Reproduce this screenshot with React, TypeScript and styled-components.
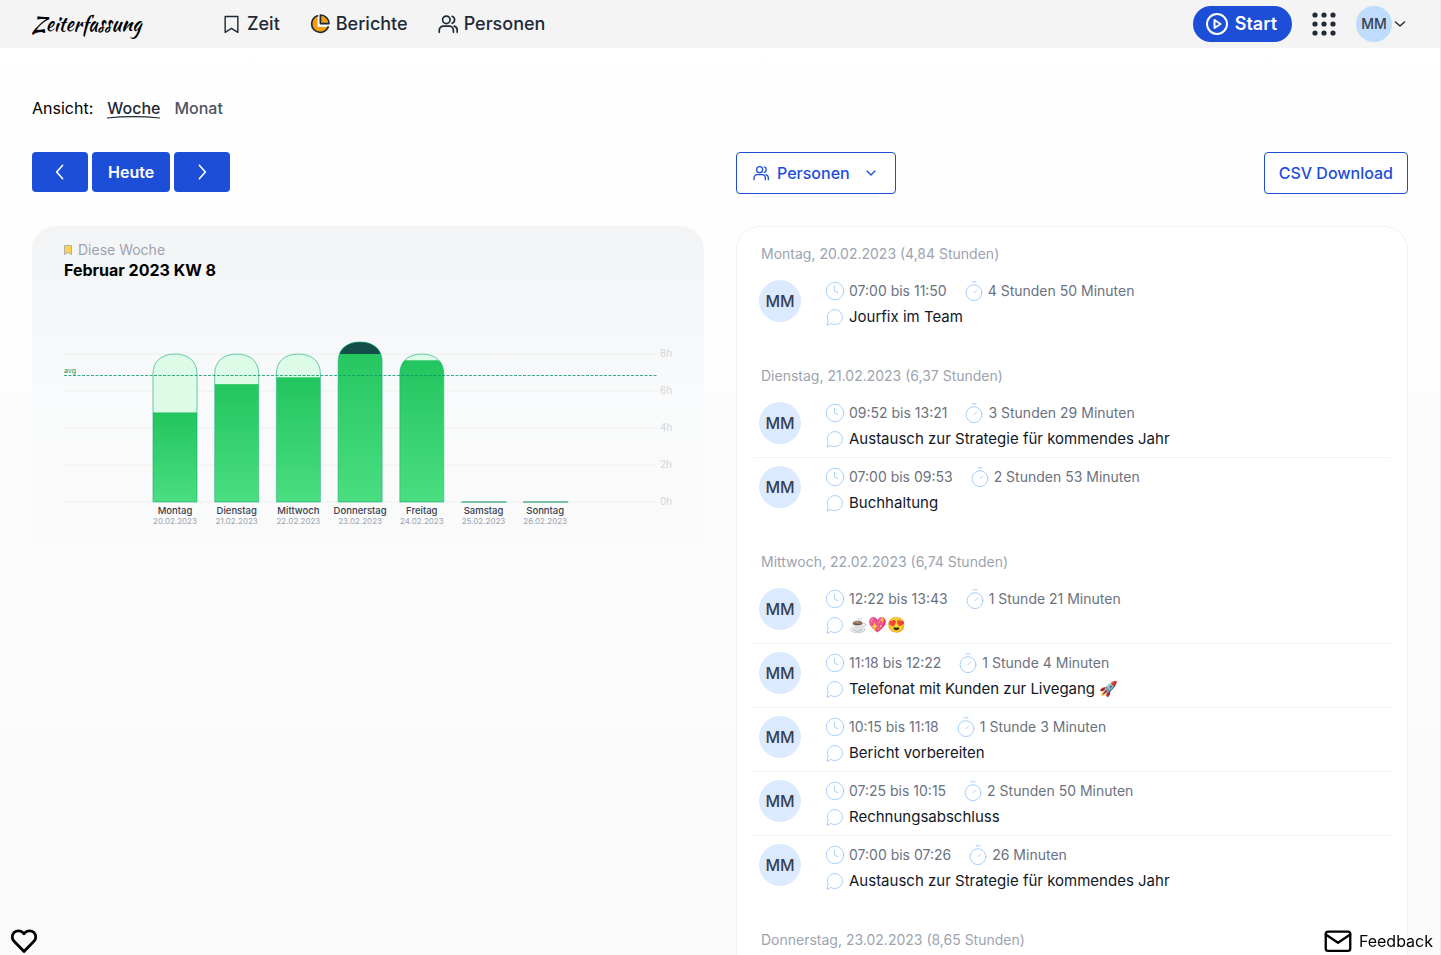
import React from "react";
import styled, { createGlobalStyle } from "styled-components";

const GlobalStyle = createGlobalStyle`
  *, *::before, *::after { box-sizing: border-box; }
  body {
    margin: 0;
    font-family: Inter, "Liberation Sans", sans-serif;
    font-size: 16px;
    line-height: 24px;
    color: #000;
  }
  h1, h2, p, ul { margin: 0; padding: 0; }
  ul { list-style: none; }
  a { color: inherit; text-decoration: none; }
  button { font: inherit; cursor: pointer; }
  svg { display: block; flex-shrink: 0; }
`;

const Page = styled.div`
  height: 100vh;
  overflow: hidden;
  border-right: 1px solid #e8e8ea;
  background: linear-gradient(#ffffff, #fafafa);
`;

const Header = styled.header`
  display: flex;
  align-items: center;
  height: 48px;
  padding: 0 34px 0 32px;
  background: #f4f4f4;
`;

const Logo = styled.a`
  width: 190px;
  font-family: "Kaushan Script", "Caveat Brush", Lato, cursive;
  font-size: 20px;
  font-weight: 400;
`;

const Nav = styled.nav`
  display: flex;
  flex: 1;
  gap: 30px;
`;

const NavLink = styled.a`
  display: flex;
  align-items: center;
  gap: 6px;
  font-size: 18px;
  font-weight: 500;
  color: #1f2937;
`;

const HeaderActions = styled.div`
  display: flex;
  align-items: center;
  gap: 20px;
`;

const StartButton = styled.button`
  display: flex;
  align-items: center;
  gap: 6px;
  height: 36px;
  padding: 0 15px 0 12px;
  border: 0;
  border-radius: 18px;
  background: #1d4ed8;
  color: #fff;
  font-size: 18px;
  font-weight: 600;
`;

const PlainButton = styled.button`
  display: flex;
  align-items: center;
  gap: 2px;
  padding: 0;
  border: 0;
  background: none;
  color: #1f2937;
`;

const Avatar = styled.span<{ $large?: boolean }>`
  display: flex;
  align-items: center;
  justify-content: center;
  flex-shrink: 0;
  width: ${(p) => (p.$large ? 42 : 36)}px;
  height: ${(p) => (p.$large ? 42 : 36)}px;
  border-radius: 50%;
  background: ${(p) => (p.$large ? "#dbeafe" : "#bfdbfe")};
  color: #374151;
  font-size: ${(p) => (p.$large ? 16 : 14)}px;
  font-weight: 500;
`;

const Main = styled.main`
  display: grid;
  grid-template-columns: 1fr 1fr;
  column-gap: 32px;
  padding: 48px 32px 0;
`;

const ViewBar = styled.div`
  display: flex;
  grid-column: 1 / -1;
  gap: 14px;
  margin-bottom: 32px;
`;

const ViewLink = styled.a<{ $active?: boolean }>`
  position: relative;
  font-weight: 500;
  color: ${(p) => (p.$active ? "#1f2937" : "#4b5563")};
`;

const Underline = styled.svg`
  position: absolute;
  left: 0;
  bottom: 1px;
  width: 100%;
  height: 4px;
`;

const Controls = styled.div<{ $spread?: boolean }>`
  display: flex;
  align-items: flex-start;
  justify-content: ${(p) => (p.$spread ? "space-between" : "flex-start")};
  gap: 4px;
  margin-bottom: 32px;
`;

const SolidButton = styled.button<{ $icon?: boolean }>`
  display: flex;
  align-items: center;
  justify-content: center;
  height: 40px;
  padding: 0 ${(p) => (p.$icon ? 20 : 16)}px;
  border: 0;
  border-radius: 4px;
  background: #1d4ed8;
  color: #fff;
  font-weight: 600;
`;

const OutlineButton = styled.button`
  display: flex;
  align-items: center;
  gap: 8px;
  height: 42px;
  padding: 0 14px;
  border: 1px solid #1d4ed8;
  border-radius: 4px;
  background: #fff;
  color: #1d4ed8;
  font-weight: 500;

  svg:first-child { margin-left: 2px; }
  svg:last-child { margin: 0 2px 0 5px; }
`;

const ChartCard = styled.section`
  align-self: start;
  padding: 14px 32px;
  border-radius: 24px 24px 0 0;
  background: linear-gradient(#f3f4f6, #f9fafb 55%, #fafafa);
`;

const ChartKicker = styled.p`
  display: flex;
  align-items: center;
  gap: 6px;
  font-size: 14px;
  line-height: 20px;
  color: #9ca3af;
`;

const ChartTitle = styled.h1`
  font-size: 16px;
  line-height: 20px;
  font-weight: 700;
`;

const ChartSvg = styled.svg`
  width: 100%;
  height: auto;
`;

const ListCard = styled.section`
  padding: 17px 16px 24px;
  border: 1px solid #f1f1f3;
  border-radius: 24px;
  background: #fff;
`;

const Day = styled.section`
  & + & { margin-top: 32px; }
`;

const DayTitle = styled.h2`
  margin-bottom: 8px;
  padding-left: 8px;
  font-size: 14px;
  line-height: 20px;
  font-weight: 400;
  color: #9ca3af;
`;

const Entry = styled.li`
  display: flex;
  gap: 24px;
  height: 64px;
  padding: 8px 6px 0;
  border-bottom: 1px solid #f3f4f6;

  &:last-child {
    height: 62px;
    border-bottom: 0;
  }
`;

const EntryBody = styled.div`
  display: flex;
  flex-direction: column;
  gap: 3px;
`;

const EntryTimes = styled.div`
  display: flex;
  gap: 17px;
  font-size: 14px;
  line-height: 22px;
  color: #6b7280;
`;

const Labelled = styled.span`
  display: flex;
  align-items: center;
  gap: 4px;
`;

const Note = styled(Labelled)`
  font-size: 15px;
  line-height: 24px;
  color: #111827;
`;

const Floating = styled.button<{ $side: "left" | "right" }>`
  position: fixed;
  bottom: 0;
  ${(p) => (p.$side === "left" ? "left: 10px" : "right: 8px")};
  display: flex;
  align-items: center;
  gap: 7px;
  height: 28px;
  padding: 0;
  border: 0;
  background: none;
  color: #000;
`;

type IconProps = { size: number; stroke?: number; color?: string; children: React.ReactNode };

const Icon = ({ size, stroke = 2, color = "currentColor", children }: IconProps) => (
  <svg
    width={size}
    height={size}
    viewBox="0 0 24 24"
    fill="none"
    stroke={color}
    strokeWidth={stroke}
    strokeLinecap="round"
    strokeLinejoin="round"
    aria-hidden="true"
  >
    {children}
  </svg>
);

const People = ({ size }: { size: number }) => (
  <Icon size={size} stroke={2}>
    <circle cx="10" cy="7" r="4.5" />
    <path d="M1.500 22v-2.500a5 5 0 0 1 5-5h7a5 5 0 0 1 5 5V22M17 2.800a4.500 4.500 0 0 1 0 8.400M19.500 14.500a5 5 0 0 1 3.500 5V22" />
  </Icon>
);

const Clock = () => (
  <Icon size={20} stroke={1} color="#93c5fd">
    <circle cx="12" cy="12" r="10.500" />
    <path d="M11.500 6v6l4 2" />
  </Icon>
);

const Stopwatch = () => (
  <Icon size={20} stroke={1} color="#93c5fd">
    <circle cx="12" cy="14" r="9.500" />
    <path d="M12 14l3-3M9.500 1h5" />
  </Icon>
);

const Bubble = () => (
  <Icon size={20} stroke={1} color="#93c5fd">
    <path d="M2.500 21.500l1.300-5.400a9 9 0 1 1 3.700 3.900z" />
  </Icon>
);

const BASE = 222;
const HOUR = 18.5;
const BAR = 44;

const bars = [
  { day: "Montag", date: "20.02.2023", hours: 4.84 },
  { day: "Dienstag", date: "21.02.2023", hours: 6.37 },
  { day: "Mittwoch", date: "22.02.2023", hours: 6.74 },
  { day: "Donnerstag", date: "23.02.2023", hours: 8.65 },
  { day: "Freitag", date: "24.02.2023", hours: 7.66 },
  { day: "Samstag", date: "25.02.2023", hours: 0 },
  { day: "Sonntag", date: "26.02.2023", hours: 0 },
];

const WeekChart = () => (
  <ChartSvg viewBox="0 0 608 250" role="img" aria-label="Stunden pro Tag">
    <defs>
      <linearGradient id="worked" x1="0" y1="0" x2="0" y2="1">
        <stop offset="0" stopColor="#22c55e" />
        <stop offset="1" stopColor="#4ade80" />
      </linearGradient>
    </defs>
    {[0, 2, 4, 6, 8].map((h) => {
      const y = BASE - h * HOUR;
      return (
        <g key={h}>
          <path d={`M0 ${y}H593`} stroke="#eeeff0" />
          <text x="596" y={y + 3} fontSize="10" fill="#d1d5db">{h}h</text>
        </g>
      );
    })}
    {bars.map((b, i) => {
      const x = 89 + i * 61.7;
      const mid = x + BAR / 2;
      const top = BASE - Math.max(8, b.hours) * HOUR;
      const fill = BASE - b.hours * HOUR;
      const shape = `M${x} ${BASE}V${top + 20}C${x} ${top + 7} ${x + 9} ${top} ${mid} ${top}S${x + BAR} ${top + 7} ${x + BAR} ${top + 20}V${BASE}z`;
      return (
        <g key={b.day}>
          {b.hours > 0 ? (
            <>
              <clipPath id={`bar${i}`}><path d={shape} /></clipPath>
              <g clipPath={`url(#bar${i})`}>
                <rect x={x} y={top} width={BAR} height={BASE - top} fill="#dcfce7" />
                <rect x={x} y={fill} width={BAR} height={BASE - fill} fill="url(#worked)" />
                {b.hours > 8 && <rect x={x} y={top} width={BAR} height={(b.hours - 8) * HOUR} fill="#134e4a" />}
              </g>
              <path d={shape} fill="none" stroke="#10a878" strokeOpacity="0.6" />
            </>
          ) : (
            <path d={`M${x} ${BASE}h${BAR + 1}`} stroke="#4fae8c" strokeWidth="1.6" />
          )}
          <text x={mid} y={BASE + 12} fontSize="9.500" fontWeight="500" fill="#374151" textAnchor="middle">{b.day}</text>
          <text x={mid} y={BASE + 22} fontSize="8" fill="#9ca3af" textAnchor="middle">{b.date}</text>
        </g>
      );
    })}
    <path d="M0 95.500H593" stroke="#059669" strokeOpacity="0.8" strokeDasharray="3 1.500" />
    <text x="0" y="93" fontSize="7" fill="#059669">avg</text>
  </ChartSvg>
);

const days = [
  {
    title: "Montag, 20.02.2023 (4,84 Stunden)",
    entries: [["07:00 bis 11:50", "4 Stunden 50 Minuten", "Jourfix im Team"]],
  },
  {
    title: "Dienstag, 21.02.2023 (6,37 Stunden)",
    entries: [
      ["09:52 bis 13:21", "3 Stunden 29 Minuten", "Austausch zur Strategie für kommendes Jahr"],
      ["07:00 bis 09:53", "2 Stunden 53 Minuten", "Buchhaltung"],
    ],
  },
  {
    title: "Mittwoch, 22.02.2023 (6,74 Stunden)",
    entries: [
      ["12:22 bis 13:43", "1 Stunde 21 Minuten", "☕️💖😍"],
      ["11:18 bis 12:22", "1 Stunde 4 Minuten", "Telefonat mit Kunden zur Livegang 🚀"],
      ["10:15 bis 11:18", "1 Stunde 3 Minuten", "Bericht vorbereiten"],
      ["07:25 bis 10:15", "2 Stunden 50 Minuten", "Rechnungsabschluss"],
      ["07:00 bis 07:26", "26 Minuten", "Austausch zur Strategie für kommendes Jahr"],
    ],
  },
  { title: "Donnerstag, 23.02.2023 (8,65 Stunden)", entries: [] },
];

export default function App() {
  return (
    <Page>
      <GlobalStyle />
      <Header>
        <Logo href="#">Zeiterfassung</Logo>
        <Nav>
          <NavLink href="#zeit">
            <Icon size={19} stroke={1.8}><path d="M4 2h16v20l-8-5-8 5z" /></Icon>
            Zeit
          </NavLink>
          <NavLink href="#berichte">
            <Icon size={20} stroke={2}>
              <path d="M9 2.200A10.200 10.200 0 1 0 21.800 15.500H9z" fill="#f59e0b" stroke="none" />
              <path d="M9 2.200A10.200 10.200 0 1 0 21.800 15.500" />
              <path d="M12.500 1.200V11.500h10.300A10.300 10.300 0 0 0 12.500 1.200z" fill="#f59e0b" />
            </Icon>
            Berichte
          </NavLink>
          <NavLink href="#personen">
            <People size={20} />
            Personen
          </NavLink>
        </Nav>
        <HeaderActions>
          <StartButton>
            <Icon size={24}><circle cx="12" cy="12" r="10" /><path d="M9.500 8l6 4-6 4z" /></Icon>
            Start
          </StartButton>
          <PlainButton aria-label="Apps">
            <svg width="24" height="24" viewBox="0 0 24 24" fill="currentColor" aria-hidden="true">
              {[3, 12, 21].map((y) => [3, 12, 21].map((x) => <circle key={`${x}-${y}`} cx={x} cy={y} r="2.600" />))}
            </svg>
          </PlainButton>
          <PlainButton aria-label="Konto">
            <Avatar>MM</Avatar>
            <Icon size={12} stroke={3}><path d="M3 8l9 8 9-8" /></Icon>
          </PlainButton>
        </HeaderActions>
      </Header>
      <Main>
        <ViewBar>
          <span>Ansicht:</span>
          <ViewLink href="#woche" $active>
            Woche
            <Underline viewBox="0 0 51 4" preserveAspectRatio="none" aria-hidden="true">
              <path d="M0 3C16 1.200 34 1.200 51 3" fill="none" stroke="#1f2937" strokeWidth="1.200" />
            </Underline>
          </ViewLink>
          <ViewLink href="#monat">Monat</ViewLink>
        </ViewBar>
        <Controls>
          <SolidButton $icon aria-label="Vorherige Woche"><Icon size={16} stroke={2.4}><path d="M16 2L7 12l9 10" /></Icon></SolidButton>
          <SolidButton>Heute</SolidButton>
          <SolidButton $icon aria-label="Nächste Woche"><Icon size={16} stroke={2.4}><path d="M8 2l9 10-9 10" /></Icon></SolidButton>
        </Controls>
        <Controls $spread>
          <OutlineButton>
            <People size={16} />
            <span>Personen</span>
            <Icon size={16}><path d="M6 9l6 6 6-6" /></Icon>
          </OutlineButton>
          <OutlineButton>CSV Download</OutlineButton>
        </Controls>
        <ChartCard>
          <ChartKicker>
            <svg width="8" height="10" viewBox="0 0 8 10" aria-hidden="true">
              <path d="M.5 .5h7v9L4 7.500.5 9.500z" fill="#fcd34d" stroke="#9ca3af" strokeWidth=".8" />
            </svg>
            Diese Woche
          </ChartKicker>
          <ChartTitle>Februar 2023 KW 8</ChartTitle>
          <WeekChart />
        </ChartCard>
        <ListCard>
          {days.map((day) => (
            <Day key={day.title}>
              <DayTitle>{day.title}</DayTitle>
              <ul>
                {day.entries.map(([span, duration, note]) => (
                  <Entry key={span}>
                    <Avatar $large>MM</Avatar>
                    <EntryBody>
                      <EntryTimes>
                        <Labelled><Clock />{span}</Labelled>
                        <Labelled><Stopwatch />{duration}</Labelled>
                      </EntryTimes>
                      <Note><Bubble />{note}</Note>
                    </EntryBody>
                  </Entry>
                ))}
              </ul>
            </Day>
          ))}
        </ListCard>
      </Main>
      <Floating $side="left" aria-label="Gefällt mir">
        <Icon size={28} stroke={2.4}>
          <path d="M12 21L3.500 12.300a5.300 5.300 0 0 1 7.500-7.500l1 1 1-1a5.300 5.300 0 0 1 7.500 7.500z" />
        </Icon>
      </Floating>
      <Floating $side="right">
        <Icon size={28} stroke={2}>
          <rect x="1.500" y="4" width="21" height="16.500" rx="2" />
          <path d="M1.500 6.500L12 13.500l10.500-7" />
        </Icon>
        Feedback
      </Floating>
    </Page>
  );
}
